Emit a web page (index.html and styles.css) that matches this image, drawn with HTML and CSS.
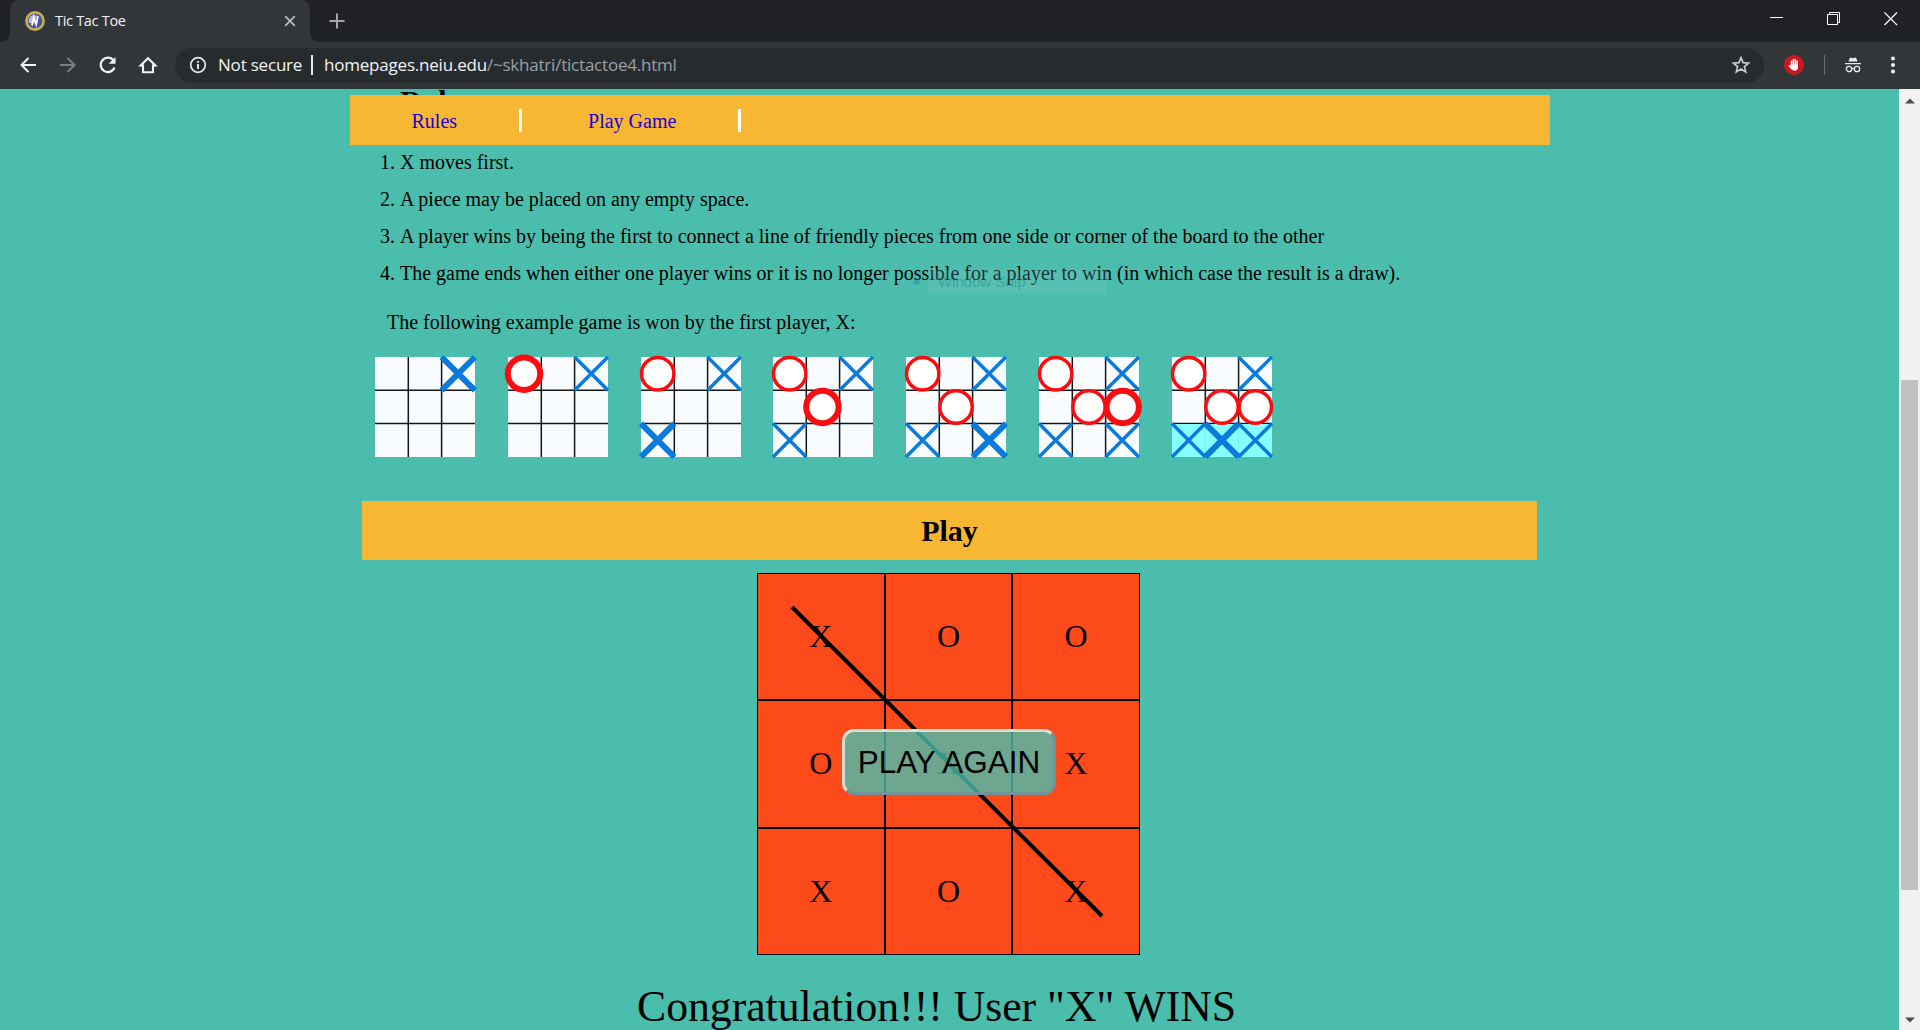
FILE: index.html
```html
<!DOCTYPE html>
<html lang="en">
<head>
<meta charset="utf-8">
<title>Tic Tac Toe</title>
<link rel="stylesheet" href="styles.css">
</head>
<body>
<header class="browser">
  <div class="tabstrip">
    <div class="tab">
      <svg class="favicon" width="20" height="20" viewBox="0 0 20 20"><circle cx="10" cy="10" r="8.6" fill="#4a5596" stroke="#c9ae55" stroke-width="2.6"/><path d="M4 12a6.300 6.300 0 0 1 4-8l4 .5-3 8z" fill="#b9bbe0"/><path d="M7 14.500 8.800 6l2.400 7.500L13 5" fill="none" stroke="#fff" stroke-width="1.800"/></svg>
      <span class="tab-title">Tic Tac Toe</span>
      <svg class="tab-close" width="12" height="12" viewBox="0 0 12 12"><path d="M1.200 1.200l9.600 9.600M10.800 1.200l-9.600 9.600" stroke="#b9bcbf" stroke-width="1.700"/></svg>
    </div>
    <svg class="newtab" width="16" height="16" viewBox="0 0 16 16"><path d="M8 .5v15M.5 8h15" stroke="#a3a6a9" stroke-width="2"/></svg>
    <div class="window-buttons">
      <svg width="14" height="14" viewBox="0 0 14 14"><path d="M0 5.500h13" stroke="#fff"/></svg>
      <svg width="14" height="14" viewBox="0 0 14 14"><path d="M.5 2.500h10v10h-10zM2.500 2.500v-2h10v10h-2" fill="none" stroke="#fff"/></svg>
      <svg width="14" height="14" viewBox="0 0 14 14"><path d="M.5.5l12.500 12.500M13 .5.5 13" stroke="#fff" stroke-width="1.200"/></svg>
    </div>
  </div>
  <div class="toolbar">
    <div class="nav-icons">
      <svg width="20" height="20" viewBox="0 0 20 20" fill="none" stroke="#f1f3f4" stroke-width="2"><path d="M18 10H3.500M10.500 3l-7 7 7 7"/></svg>
      <svg width="20" height="20" viewBox="0 0 20 20" fill="none" stroke="#7c7f82" stroke-width="2"><path d="M2 10h14.500M9.500 3l7 7-7 7"/></svg>
      <svg width="20" height="20" viewBox="0 0 20 20"><path d="M16.600 12.500A7.200 7.200 0 1 1 15 4.800L16.500 6.500" fill="none" stroke="#f1f3f4" stroke-width="2.200"/><path d="M17.500 2v6.800h-6.800z" fill="#f1f3f4"/></svg>
      <svg width="20" height="20" viewBox="0 0 20 20"><path d="M2.600 10.500 10 3.300l7.400 7.200H15v6.700H5v-6.700z" fill="none" stroke="#f1f3f4" stroke-width="2.100"/></svg>
    </div>
    <div class="omnibox">
      <svg class="info" width="18" height="18" viewBox="0 0 18 18"><circle cx="9" cy="9" r="7.300" fill="none" stroke="#e8eaed" stroke-width="1.700"/><path d="M9 8v5M9 4.900v1.900" stroke="#e8eaed" stroke-width="1.900"/></svg>
      <span class="secure">Not secure</span>
      <span class="divider"></span>
      <span class="url"><span class="url-host">homepages.neiu.edu</span><span class="url-path">/~skhatri/tictactoe4.html</span></span>
      <svg class="star" width="20" height="20" viewBox="0 0 20 20"><path d="M10 2.700l2.100 5 5.400.4-4.100 3.500 1.300 5.300-4.700-2.900-4.700 2.900 1.300-5.300L2.500 8.100l5.400-.4z" fill="none" stroke="#c8cacc" stroke-width="1.700"/></svg>
    </div>
    <svg class="blocker" width="20" height="20" viewBox="0 0 20 20"><circle cx="10" cy="10" r="10" fill="#cb1720"/><path d="M7.500 11V6.200M9.400 9.500V4.500M11.300 9.500V4.500M13.200 10V6" stroke="#fff" stroke-width="1.500" stroke-linecap="round"/><path d="M6.800 9.500h7.100v3.200c0 1.700-1.300 3-3 3-1.900 0-3.200-.8-4.300-2.200L4.500 10.800c-.2-.8.800-1.300 2.300.2z" fill="#fff"/></svg>
    <span class="bar"></span>
    <svg class="incognito" width="18" height="18" viewBox="0 0 18 18"><path d="M4.500 5.500 6 1.500l3 .7 3-.7 1.500 4zM1 7h16v1.300H1z" fill="#e8eaed"/><g fill="none" stroke="#e8eaed" stroke-width="1.300"><circle cx="5" cy="13" r="2.700"/><circle cx="13" cy="13" r="2.700"/><path d="M7.700 12.800q1.300-1 2.600 0"/></g></svg>
    <svg class="menu" width="4" height="18" viewBox="0 0 4 18" fill="#f1f3f4"><circle cx="2" cy="2.500" r="2"/><circle cx="2" cy="9" r="2"/><circle cx="2" cy="15.500" r="2"/></svg>
  </div>
</header>

<div class="viewport">
  <main class="page">
    <nav class="site-nav"><a href="#rules">Rules</a><a href="#play">Play Game</a></nav>
    <h2 class="rules-title" id="rules">Rules</h2>
    <ol class="rules">
      <li><span>X moves first.</span></li>
      <li><span>A piece may be placed on any empty space.</span></li>
      <li><span>A player wins by being the first to connect a line of friendly pieces from one side or corner of the board to the other</span></li>
      <li><span>The game ends when either one player wins or it is no longer possible for a player to win (in which case the result is a draw).</span></li>
    </ol>
    <div class="snip-ghost"><i></i><span>Window Snip</span></div>
    <p class="example">The following example game is won by the first player, X:</p>

    <svg class="defs" width="0" height="0">
      <defs>
        <g id="grid"><path d="M0 0h100v100H0z" fill="#f8fcff"/><path d="M33.300 0v100M66.600 0v100M0 33.300h100M0 66.600h100" stroke="#151515" stroke-width="1.500"/></g>
        <path id="x" d="M0 0l33.300 33.300M33.300 0 0 33.300" stroke="#0a7bdc"/>
        <circle id="o" cx="16.700" cy="16.700" r="16.200" fill="#fff" stroke="#fa0d10"/>
      </defs>
    </svg>
    <div class="examples">
      <svg viewBox="0 0 100 100"><use href="#grid"/><use href="#x" x="66.600" class="new"/></svg>
      <svg viewBox="0 0 100 100"><use href="#grid"/><use href="#x" x="66.600"/><use href="#o" x="-.7" class="new"/></svg>
      <svg viewBox="0 0 100 100"><use href="#grid"/><use href="#x" x="66.600"/><use href="#o"/><use href="#x" y="66.600" class="new"/></svg>
      <svg viewBox="0 0 100 100"><use href="#grid"/><use href="#x" x="66.600"/><use href="#o"/><use href="#x" y="66.600"/><use href="#o" x="32.700" y="33.300" class="new"/></svg>
      <svg viewBox="0 0 100 100"><use href="#grid"/><use href="#x" x="66.600"/><use href="#o"/><use href="#x" y="66.600"/><use href="#o" x="33.300" y="33.300"/><use href="#x" x="66.600" y="66.600" class="new"/></svg>
      <svg viewBox="0 0 100 100"><use href="#grid"/><use href="#x" x="66.600"/><use href="#o"/><use href="#x" y="66.600"/><use href="#o" x="33.300" y="33.300"/><use href="#x" x="66.600" y="66.600"/><use href="#o" x="67" y="33.300" class="new"/></svg>
      <svg viewBox="0 0 100 100"><use href="#grid"/><path d="M0 67h100v33H0z" fill="#8ff"/><path d="M33.300 67v33M66.600 67v33" stroke="#78eef0"/><use href="#x" x="66.600"/><use href="#o"/><use href="#o" x="33.300" y="33.300"/><use href="#o" x="66.600" y="33.300"/><use href="#x" y="66.600"/><use href="#x" x="66.600" y="66.600"/><use href="#x" x="33.300" y="66.600" class="new"/></svg>
    </div>

    <h2 class="play-title" id="play">Play</h2>
    <div class="board">
      <div>X</div><div>O</div><div>O</div>
      <div>O</div><div>X</div><div>X</div>
      <div>X</div><div>O</div><div>X</div>
      <svg class="strike" width="383" height="382" viewBox="0 0 383 382"><path d="M35 34 345 343" stroke="#000" stroke-width="4"/></svg>
      <button class="again">PLAY AGAIN</button>
    </div>
    <p class="result">Congratulation!!! User "X" WINS</p>
  </main>
  <div class="scrollbar">
    <svg width="10" height="6" viewBox="0 0 10 6"><path d="M0 5.500 5 .5l5 5z" fill="#4d4d4d"/></svg>
    <div class="thumb"></div>
    <svg width="10" height="6" viewBox="0 0 10 6"><path d="M0 .5l5 5 5-5z" fill="#4d4d4d"/></svg>
  </div>
</div>
</body>
</html>
```
FILE: styles.css
```css
* { box-sizing: border-box; }

body {
  margin: 0;
  height: 1030px;
  display: flex;
  flex-direction: column;
  overflow: hidden;
  font: 20px/23px "Liberation Serif", "Times New Roman", serif;
  color: #000;
}

svg { display: block; flex: none; }

/* Browser frame */
.browser { flex: none; font-family: "Open Sans", "Noto Sans", sans-serif; white-space: nowrap; }

.tabstrip {
  height: 42px;
  background: #202124;
  display: flex;
  align-items: center;
  padding-left: 10px;
}

.tab {
  position: relative;
  width: 300px;
  height: 42px;
  background: #323639;
  border-radius: 9px 9px 0 0;
  display: flex;
  align-items: center;
  padding: 0 14px 0 15px;
}

.tab::before,
.tab::after {
  content: "";
  position: absolute;
  bottom: 0;
  width: 9px;
  height: 9px;
}

.tab::before { left: -9px; background: radial-gradient(circle at 0 0, transparent 8.5px, #323639 9px); }
.tab::after { right: -9px; background: radial-gradient(circle at 100% 0, transparent 8.5px, #323639 9px); }

.tab-title { margin: -2px 0 0 10px; font-size: 14.5px; letter-spacing: -0.3px; color: #f1f3f4; flex: 1; }
.newtab { margin-left: 19px; }
.window-buttons { margin: -5px 22px 0 auto; display: flex; gap: 43px; }

.toolbar {
  height: 47px;
  background: #323639;
  border-bottom: 1px solid #27383a;
  display: flex;
  align-items: center;
}

.nav-icons { display: flex; gap: 20px; margin-left: 18px; }

.omnibox {
  width: 1589px;
  height: 35px;
  margin-left: 17px;
  border-radius: 18px;
  background: #282b2e;
  display: flex;
  align-items: center;
  padding: 0 13px 0 14px;
  font-size: 17px;
  color: #f1f3f4;
}

.secure { margin: -2px 0 0 11px; width: 84px; letter-spacing: -0.2px; }
.divider { width: 2px; height: 20px; margin: 0 11px 0 9px; background: #e8eaed; }
.url { margin-top: -2px; letter-spacing: -0.21px; }
.url-path { color: #9aa0a6; }
.star { margin-left: auto; }
.blocker { margin-left: 20px; }
.bar { width: 1px; height: 20px; margin-left: 20px; background: #6b6e71; }
.incognito { margin-left: 19px; }
.menu { margin-left: 29px; }

/* Page */
.viewport { flex: 1; min-height: 0; display: flex; background: #4abdac; overflow: hidden; }

.page {
  width: 1200px;
  margin: 0 auto 0 350px;
  position: relative;
  flex: none;
}

.site-nav {
  position: absolute;
  z-index: 2;
  top: 6px;
  left: 0;
  width: 1200px;
  height: 50px;
  background: #f7b733;
  display: flex;
  align-items: center;
  gap: 5px;
}

.site-nav a {
  padding: 1px 61.5px 0;
  height: 23px;
  border-right: 3px solid #fff;
  color: #1c00d8;
  text-decoration: none;
}

.rules-title { margin: -3px 0 0 50px; height: 57px; font-size: 30px; line-height: 30px; }

.rules { margin: 0; padding: 0 0 0 50px; }
.rules li { height: 37px; padding-top: 1px; line-height: 37px; }

.snip-ghost {
  position: absolute;
  left: 578px;
  top: 181px;
  width: 178px;
  height: 23px;
  padding-left: 10px;
  background: rgba(120, 205, 198, 0.25);
  font: 15px/24px "Liberation Sans", Arial, sans-serif;
  color: rgba(10, 95, 100, 0.3);
}

.snip-ghost i {
  position: absolute;
  left: -15px;
  top: 8px;
  width: 7px;
  height: 7px;
  border-radius: 50%;
  background: rgba(10, 130, 150, 0.3);
}

.example { margin: 20px 0 0 37px; }

.defs { position: absolute; }

.examples { display: flex; gap: 32.800px; margin: 23px 0 0 25px; }
.examples svg { width: 100px; height: 100px; overflow: visible; }
.examples use { stroke-width: 3.500px; }
.examples .new { stroke-width: 6px; }

.play-title {
  height: 59px;
  margin: 44px 13px 13px 12px;
  background: #f7b733;
  font-size: 30px;
  line-height: 60px;
  text-align: center;
}

.board {
  position: relative;
  width: 383px;
  height: 382px;
  margin-left: 407px;
  display: grid;
  grid-template: repeat(3, 1fr) / repeat(3, 1fr);
}

.board div {
  border: 1px solid #000;
  background: #fc4a1a;
  display: flex;
  align-items: center;
  justify-content: center;
  font-size: 32px;
}

.strike { position: absolute; left: 0; top: 0; }

.again {
  position: absolute;
  left: 85px;
  top: 156px;
  width: 214px;
  height: 66px;
  padding: 0;
  border: 3px solid;
  border-color: #dcded2 #70949a #70949a #dcded2;
  border-radius: 12px;
  background: rgba(74, 189, 172, 0.8);
  font: 31.500px/60px "Liberation Sans", Arial, sans-serif;
  color: #000;
}

.result { margin: 24px 0 0 287px; font-size: 43.700px; line-height: 54px; white-space: nowrap; }

.scrollbar {
  width: 21px;
  margin-left: auto;
  background: #f1f1f1;
  display: flex;
  flex-direction: column;
  align-items: center;
  padding: 9px 0 7px;
}

.thumb { width: 17px; height: 510px; margin: 276px 0 auto; background: #c1c1c1; }
```
